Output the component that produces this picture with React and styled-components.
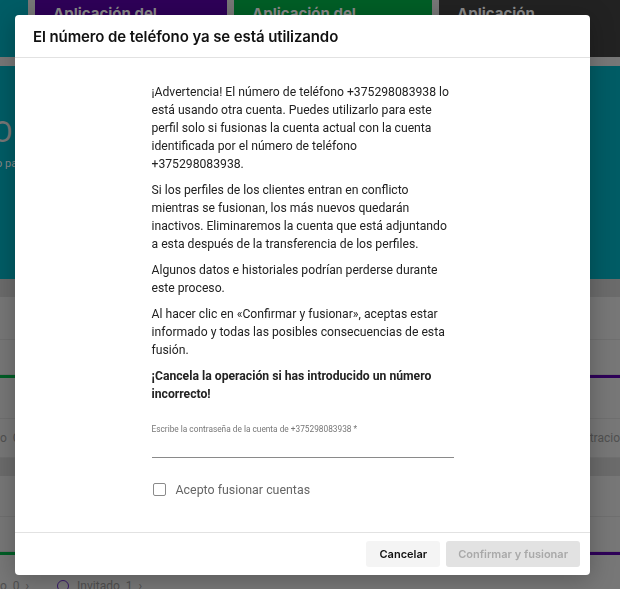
import React from 'react'
import styled, { createGlobalStyle } from 'styled-components'

const Global = createGlobalStyle`
  html, body { margin: 0; padding: 0; }
  body { font-family: Roboto, 'Noto Sans', sans-serif; background: #777; overflow: hidden; }
`

const Page = styled.div`
  width: 620px;
  height: 589px;
  background: #777;
  display: flex;
  flex-direction: column;
  overflow: hidden;
`

const Cards = styled.div`
  display: flex;
  gap: 7px;
  height: 57px;
  flex: 0 0 57px;
  margin-left: -170px;
`

const Card = styled.div`
  flex: 0 0 ${(p) => p.w}px;
  background: ${(p) => p.bg};
  padding: 5px 18px;
  box-sizing: border-box;
  color: #8a8a8a;
  font-family: Inter, sans-serif;
  font-weight: 700;
  font-size: 15px;
  line-height: 18px;
`

const Banner = styled.div`
  margin-top: 9px;
  flex: 0 0 213px;
  background: #005c65;
  color: #7a7a7a;
  padding: 48px 0 0 0;
  box-sizing: border-box;
`

const BigO = styled.div`
  font-size: 30px;
  margin-left: -8px;
  color: #777;
`

const Sub = styled.div`
  font-size: 11px;
  margin-top: 8px;
  margin-left: -4px;
  color: #8a8a8a;
`

const Band = styled.div`
  flex: 0 0 18px;
  background: #6b6b6b;
`

const Row = styled.div`
  flex: 0 0 ${(p) => p.h}px;
  border-bottom: 1px solid #6f6f6f;
  display: flex;
  gap: ${(p) => p.gap || 0}px;
  justify-content: ${(p) => (p.spread ? 'space-between' : 'flex-start')};
  align-items: ${(p) => (p.low ? 'flex-end' : 'center')};
  color: #505050;
  font-size: 12px;
`

const Stat = styled.span`
  display: flex;
  align-items: center;
  gap: 8px;
  margin-left: ${(p) => p.left || 0}px;
`

const Bars = styled.div`
  display: flex;
  justify-content: space-between;
  flex: 0 0 3px;
`

const Bar = styled.div`
  width: ${(p) => p.w}px;
  background: ${(p) => p.bg};
`

const Overlay = styled.div`
  position: fixed;
  inset: 0;
  padding: 15px 30px 14px 15px;
  display: flex;
  box-sizing: border-box;
`

const Modal = styled.div`
  flex: 1;
  background: #fff;
  border-radius: 4px;
  box-shadow: 0 4px 24px rgba(0, 0, 0, 0.25);
  display: flex;
  flex-direction: column;
`

const Header = styled.div`
  height: 42px;
  padding: 0 18px;
  display: flex;
  align-items: center;
  border-bottom: 1px solid #e2e2e2;
  font-family: Inter, sans-serif;
  font-weight: 600;
  font-size: 15px;
  color: #111;
  letter-spacing: -0.1px;
`

const Body = styled.div`
  flex: 1;
  display: flex;
  justify-content: center;
  padding-top: 25px;
`

const Content = styled.div`
  width: 302px;
`

const Para = styled.p`
  margin: 0 0 8px;
  font-size: 12.2px;
  line-height: 18px;
  color: #222;
  font-weight: ${(p) => (p.bold ? 700 : 400)};
`

const Field = styled.div`
  margin-top: 21px;
  border-bottom: 1px solid #8a8a8a;
  height: 33px;
`

const Label = styled.div`
  font-size: 8.3px;
  color: #777;
`

const Check = styled.label`
  margin-top: 24px;
  display: flex;
  align-items: center;
  gap: 10px;
  font-size: 12.4px;
  color: #666;
`

const Box = styled.span`
  width: 11px;
  height: 11px;
  border: 1.5px solid #8a8a8a;
  border-radius: 2px;
  margin-left: 1px;
`

const Footer = styled.div`
  height: 42px;
  border-top: 1px solid #e2e2e2;
  display: flex;
  justify-content: flex-end;
  align-items: center;
  gap: 6px;
  padding-right: 10px;
`

const Button = styled.button`
  height: 26px;
  border: none;
  border-radius: 3px;
  padding: 0 ${(p) => (p.primary ? 12 : 13)}px;
  font-family: Inter, sans-serif;
  font-weight: 600;
  font-size: 11px;
  background: ${(p) => (p.primary ? '#e2e2e2' : '#f4f4f4')};
  color: ${(p) => (p.primary ? '#a9a9a9' : '#111')};
`

const Ring = styled.span`
  width: 10px;
  height: 10px;
  border: 1.5px solid #3a1a6a;
  border-radius: 50%;
`

export default function App() {
  return (
    <>
      <Global />
      <Page>
        <Cards>
          <Card w={198} bg="#005c65" />
          <Card w={192} bg="#2e0058">Aplicación del</Card>
          <Card w={198} bg="#005e26">Aplicación del</Card>
          <Card w={200} bg="#222">Aplicación<br />dores</Card>
        </Cards>
        <Banner>
          <BigO>O</BigO>
          <Sub>o pa</Sub>
        </Banner>
        <Band />
        <Row h={42} />
        <Row h={34} />
        <Bars><Bar w={15} bg="#005e26" /><Bar w={30} bg="#2e0058" /></Bars>
        <Row h={40} />
        <Row h={38} spread><span>o &nbsp;C</span><span>istracio</span></Row>
        <Band />
        <Row h={40} />
        <Row h={34} />
        <Bars><Bar w={15} bg="#005e26" /><Bar w={30} bg="#2e0058" /></Bars>
        <Row h={38} low>
          <Stat>o &nbsp;0 &nbsp;›</Stat>
          <Stat left={28}><Ring />Invitado &nbsp;1 &nbsp;›</Stat>
        </Row>
      </Page>
      <Overlay>
        <Modal>
          <Header>El número de teléfono ya se está utilizando</Header>
          <Body>
            <Content>
              <Para>¡Advertencia! El número de teléfono +375298083938 lo está usando otra cuenta. Puedes utilizarlo para este perfil solo si fusionas la cuenta actual con la cuenta identificada por el número de teléfono<br />+375298083938.</Para>
              <Para>Si los perfiles de los clientes entran en conflicto mientras se fusionan, los más nuevos quedarán inactivos. Eliminaremos la cuenta que está adjuntando a esta después de la transferencia de los perfiles.</Para>
              <Para>Algunos datos e historiales podrían perderse durante este proceso.</Para>
              <Para>Al hacer clic en «Confirmar y fusionar», aceptas estar informado y todas las posibles consecuencias de esta fusión.</Para>
              <Para bold>¡Cancela la operación si has introducido un número incorrecto!</Para>
              <Field>
                <Label>Escribe la contraseña de la cuenta de +375298083938 *</Label>
              </Field>
              <Check>
                <Box />
                Acepto fusionar cuentas
              </Check>
            </Content>
          </Body>
          <Footer>
            <Button>Cancelar</Button>
            <Button primary disabled>Confirmar y fusionar</Button>
          </Footer>
        </Modal>
      </Overlay>
    </>
  )
}
